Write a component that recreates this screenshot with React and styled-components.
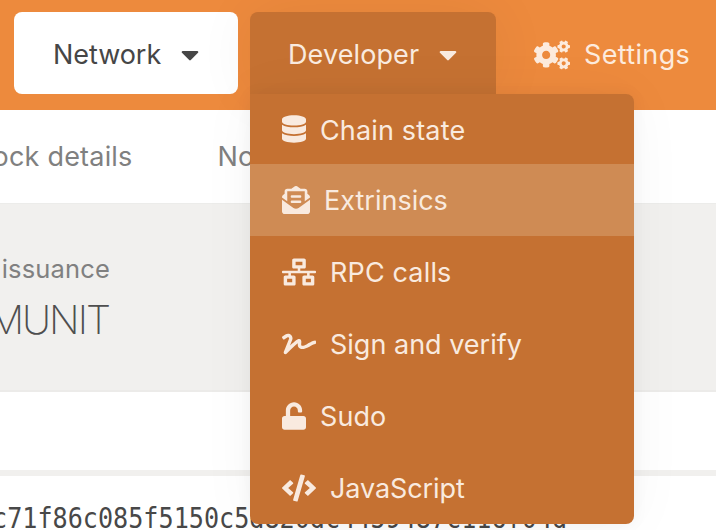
import React from 'react';
import styled, { createGlobalStyle } from 'styled-components';
import { FaCaretDown, FaCogs, FaDatabase, FaEnvelopeOpenText, FaNetworkWired, FaSignature, FaUnlock, FaCode } from 'react-icons/fa';

const Global = createGlobalStyle`
  * { box-sizing: border-box; }
  body { margin: 0; overflow: hidden; font-family: Inter, "Noto Sans", sans-serif; }
`;
const Page = styled.div`
  position: relative;
  width: 716px;
  height: 530px;
  overflow: hidden;
  background: #fff;
  color: #4e4e4e;
  white-space: nowrap;
`;
const Header = styled.header`
  display: flex;
  align-items: flex-start;
  height: 110px;
  padding: 12px 0 0 14px;
  background: #ed8a3d;
`;
const NetworkButton = styled.div`
  display: flex;
  align-items: center;
  width: 224px;
  height: 82px;
  padding: 3px 0 0 39px;
  border-radius: 8px;
  background: #fff;
  color: #464646;
`;
const Label = styled.span`
  font-size: 27px;
  font-weight: 420;
  line-height: 36px;
  letter-spacing: ${(p) => p.$track || 0}px;
`;
const Caret = styled(FaCaretDown)`
  width: 18px;
  height: 29px;
  margin-left: 20px;
`;
const Settings = styled.div`
  display: flex;
  align-items: center;
  gap: 14px;
  height: 82px;
  margin-left: 296px;
  padding-top: 3px;
  color: #fdebdd;
`;
const Tabs = styled.nav`
  display: flex;
  gap: 85px;
  height: 93px;
  margin-left: -32px;
  padding-top: 29px;
  color: #808080;
`;
const Summary = styled.section`
  display: flex;
  flex-direction: column;
  align-items: flex-end;
  width: 716px;
  height: 189px;
  padding: 47px 606px 0 0;
  background: #f1f0ee;
  border-top: 1px solid #ececea;
  border-bottom: 2px solid #ecebe9;
  color: #808080;
`;
const Issuance = styled.div`
  font-size: 25.5px;
  font-weight: 420;
  line-height: 36px;
  letter-spacing: 0.15px;
`;
const Amount = styled.div`
  margin: 9px 1px 0 0;
  font-size: 40px;
  line-height: 48px;
  font-weight: 200;
  letter-spacing: -2px;
  color: #4e4e4e;
`;
const Divider = styled.div`
  height: 6px;
  margin-top: 78px;
  background: #f1f0ee;
`;
const Hash = styled.div`
  margin: 25px 0 0 -8px;
  font-family: "DejaVu Sans Mono", monospace;
  font-size: 25.15px;
  line-height: 36px;
  transform: scaleY(1.1);
  color: #484848;
`;
const Dropdown = styled.div`
  position: absolute;
  top: 12px;
  left: 250px;
  width: 384px;
  color: #f9eadf;
`;
const Trigger = styled.div`
  display: flex;
  align-items: center;
  width: 246px;
  height: 82px;
  padding: 3px 0 0 38px;
  border-radius: 8px 8px 0 0;
  background: #c57132;
  box-shadow: 0 0 60px rgba(0, 0, 0, 0.06);
`;
const Menu = styled.div`
  height: 430px;
  border-radius: 0 8px 8px 8px;
  background: #c57132;
  box-shadow: 0 0 16px rgba(0, 0, 0, 0.05), 0 0 60px rgba(0, 0, 0, 0.04);
`;
const MenuItem = styled.div`
  display: flex;
  align-items: center;
  gap: 14px;
  height: ${(p) => p.$height || 72}px;
  padding-left: 32px;
  background: ${(p) => (p.$active ? '#cf8b54' : 'transparent')};
  svg { flex: none; width: ${(p) => p.$icon}px; height: 28px; }
  span { padding-top: ${(p) => p.$drop || 2}px; }
`;

const items = [
  { label: 'Chain state', icon: FaDatabase, width: 24, height: 70, drop: 3, track: 0.15 },
  { label: 'Extrinsics', icon: FaEnvelopeOpenText, width: 28, active: true, track: 0 },
  { label: 'RPC calls', icon: FaNetworkWired, width: 34, track: 0.15 },
  { label: 'Sign and verify', icon: FaSignature, width: 34, track: 0 },
  { label: 'Sudo', icon: FaUnlock, width: 24, track: 0.1 },
  { label: 'JavaScript', icon: FaCode, width: 34, track: -0.1 },
];

export default function App() {
  return (
    <Page>
      <Global />
      <Header>
        <NetworkButton><Label $track={-0.05}>Network</Label><Caret /></NetworkButton>
        <Settings><FaCogs size={36} /><Label $track={0.35}>Settings</Label></Settings>
      </Header>
      <Tabs><Label $track={0.2}>Block details</Label><Label>Node</Label></Tabs>
      <Summary>
        <Issuance>total issuance</Issuance>
        <Amount>1.0000 MUNIT</Amount>
      </Summary>
      <Divider />
      <Hash>c71f86c085f5150c5d820dc4459487c116f04d</Hash>
      <Dropdown>
        <Trigger><Label $track={0.1}>Developer</Label><Caret /></Trigger>
        <Menu>
          {items.map(({ label, icon: Icon, width, height, drop, active, track }) => (
            <MenuItem key={label} $height={height} $drop={drop} $active={active} $icon={width}>
              <Icon /><Label $track={track}>{label}</Label>
            </MenuItem>
          ))}
        </Menu>
      </Dropdown>
    </Page>
  );
}
